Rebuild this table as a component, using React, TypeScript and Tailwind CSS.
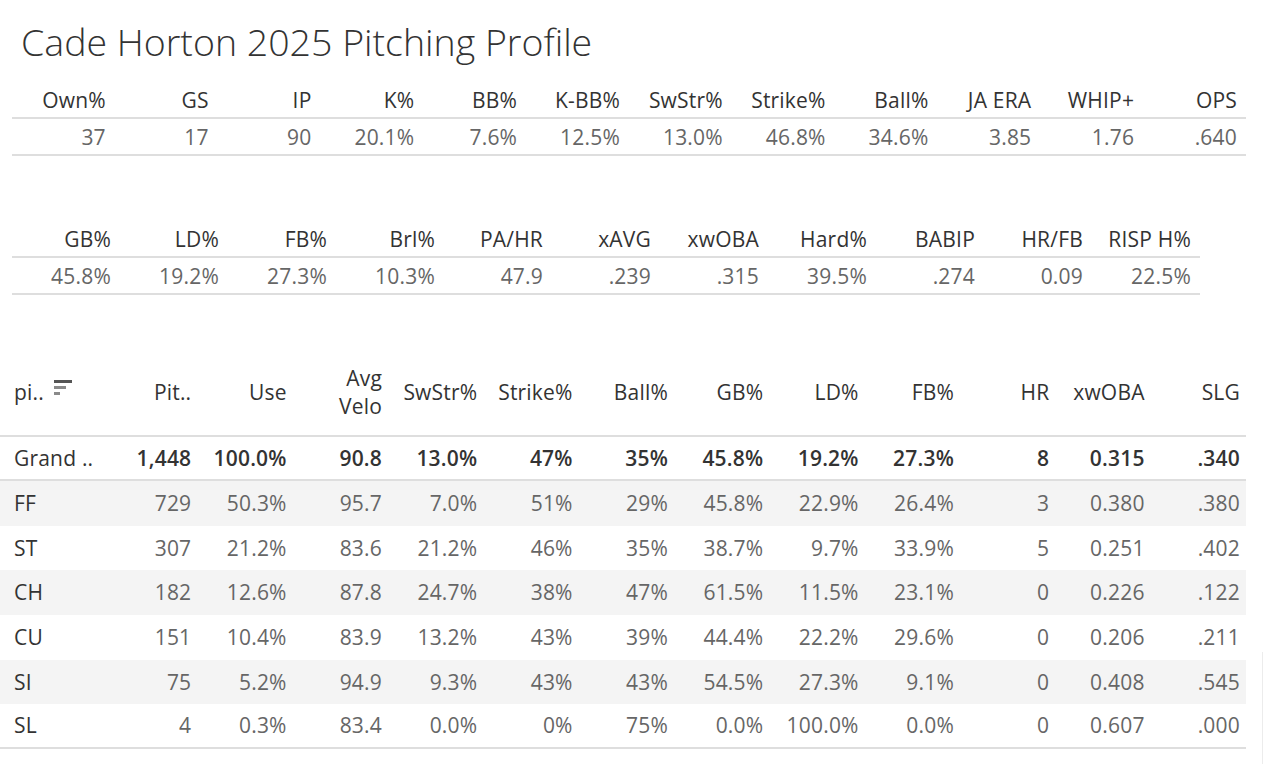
import React from "react";

const summary1 = [
  ["Own%", "37"],
  ["GS", "17"],
  ["IP", "90"],
  ["K%", "20.1%"],
  ["BB%", "7.6%"],
  ["K-BB%", "12.5%"],
  ["SwStr%", "13.0%"],
  ["Strike%", "46.8%"],
  ["Ball%", "34.6%"],
  ["JA ERA", "3.85"],
  ["WHIP+", "1.76"],
  ["OPS", ".640"],
];

const summary2 = [
  ["GB%", "45.8%"],
  ["LD%", "19.2%"],
  ["FB%", "27.3%"],
  ["Brl%", "10.3%"],
  ["PA/HR", "47.9"],
  ["xAVG", ".239"],
  ["xwOBA", ".315"],
  ["Hard%", "39.5%"],
  ["BABIP", ".274"],
  ["HR/FB", "0.09"],
  ["RISP H%", "22.5%"],
];

const pitchCols = ["Pit..", "Use", "Avg Velo", "SwStr%", "Strike%", "Ball%", "GB%", "LD%", "FB%", "HR", "xwOBA", "SLG"];

const grand = ["1,448", "100.0%", "90.8", "13.0%", "47%", "35%", "45.8%", "19.2%", "27.3%", "8", "0.315", ".340"];

const pitches: { name: string; vals: string[] }[] = [
  { name: "FF", vals: ["729", "50.3%", "95.7", "7.0%", "51%", "29%", "45.8%", "22.9%", "26.4%", "3", "0.380", ".380"] },
  { name: "ST", vals: ["307", "21.2%", "83.6", "21.2%", "46%", "35%", "38.7%", "9.7%", "33.9%", "5", "0.251", ".402"] },
  { name: "CH", vals: ["182", "12.6%", "87.8", "24.7%", "38%", "47%", "61.5%", "11.5%", "23.1%", "0", "0.226", ".122"] },
  { name: "CU", vals: ["151", "10.4%", "83.9", "13.2%", "43%", "39%", "44.4%", "22.2%", "29.6%", "0", "0.206", ".211"] },
  { name: "SI", vals: ["75", "5.2%", "94.9", "9.3%", "43%", "43%", "54.5%", "27.3%", "9.1%", "0", "0.408", ".545"] },
  { name: "SL", vals: ["4", "0.3%", "83.4", "0.0%", "0%", "75%", "0.0%", "100.0%", "0.0%", "0", "0.607", ".000"] },
];

function SortIcon() {
  return (
    <svg width="20" height="18" viewBox="0 0 20 18" className="ml-[10px] mt-[-6px]">
      <rect x="0" y="0" width="18" height="3" fill="#555" />
      <rect x="0" y="6" width="12" height="3" fill="#8a8a8a" />
      <rect x="0" y="12" width="6" height="3" fill="#8a8a8a" />
    </svg>
  );
}

function SummaryTable({ items, cols, width }: { items: string[][]; cols: string; width: string }) {
  return (
    <div className={`${width} ml-[12px]`}>
      <div className={`grid ${cols} h-[36px] border-b-2 border-[#dedede]`}>
        {items.map(([h]) => (
          <div key={h} className="flex items-center justify-end pr-[9px] text-[#333]">
            {h}
          </div>
        ))}
      </div>
      <div className={`grid ${cols} h-[37px] border-b-2 border-[#dedede]`}>
        {items.map(([h, v]) => (
          <div key={h} className="flex items-center justify-end pr-[9px] pt-[2px] text-[#666]">
            {v}
          </div>
        ))}
      </div>
    </div>
  );
}

export default function App() {
  return (
    <div
      className="relative w-[1266px] h-[764px] bg-white overflow-hidden text-[21px] leading-none tracking-[0.2px]"
      style={{ fontFamily: '"Open Sans", "Noto Sans", sans-serif' }}
    >
      <div className="h-[83px] flex items-center pl-[21px] text-[37.5px] font-light text-[#333] tracking-[0px]">
        Cade Horton 2025 Pitching Profile
      </div>

      <SummaryTable items={summary1} cols="grid-cols-12" width="w-[1234px]" />

      <div className="h-[66px]" />

      <SummaryTable items={summary2} cols="grid-cols-11" width="w-[1188px]" />

      <div className="h-[54px]" />

      {/* pitch mix table */}
      <div className="w-[1246px]">
        <div className="flex h-[88px] border-b-2 border-[#dedede]">
          <div className="w-[102px] flex items-center pl-[14px] text-[#333]">
            pi..
            <SortIcon />
          </div>
          <div className="flex-1 grid grid-cols-12">
            {pitchCols.map((c) => (
              <div key={c} className="flex items-center justify-end pr-[6px] text-[#333] text-right">
                {c === "Avg Velo" ? (
                  <span className="leading-[28px]">
                    Avg
                    <br />
                    Velo
                  </span>
                ) : (
                  c
                )}
              </div>
            ))}
          </div>
        </div>

        <div className="flex h-[44px] border-b-2 border-[#dedede] font-semibold text-[#333]">
          <div className="w-[102px] flex items-center pl-[14px] font-normal">Grand ..</div>
          <div className="flex-1 grid grid-cols-12">
            {grand.map((v, i) => (
              <div key={i} className="flex items-center justify-end pr-[6px]">
                {v}
              </div>
            ))}
          </div>
        </div>

        {pitches.map((p, r) => (
          <div
            key={p.name}
            className={`flex h-[44.7px] ${r % 2 === 0 ? "bg-[#f4f4f4]" : "bg-white"} ${
              r === pitches.length - 1 ? "border-b-2 border-[#dedede]" : ""
            }`}
          >
            <div className="w-[102px] flex items-center pl-[14px] text-[#333]">{p.name}</div>
            <div className="flex-1 grid grid-cols-12 text-[#666]">
              {p.vals.map((v, i) => (
                <div key={i} className="flex items-center justify-end pr-[6px]">
                  {v}
                </div>
              ))}
            </div>
          </div>
        ))}
      </div>

      <div className="absolute left-[1262px] top-[652px] h-[112px] border-l border-[#ececec]" />
    </div>
  );
}
